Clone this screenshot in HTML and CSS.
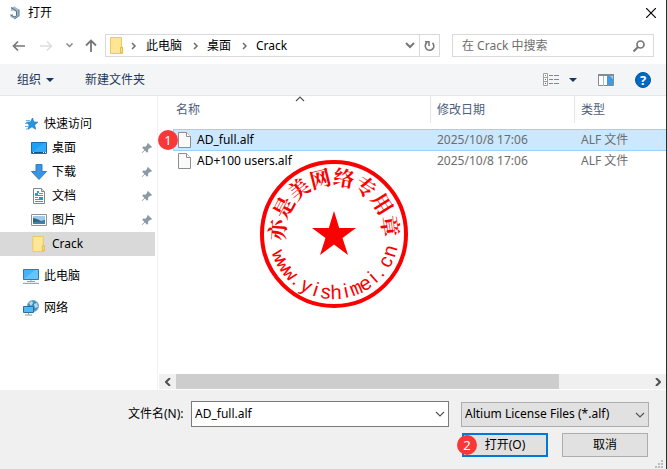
FILE: index.html
```html
<!DOCTYPE html>
<html lang="zh-CN">
<head>
<meta charset="utf-8">
<title>打开</title>
<link rel="stylesheet" href="styles.css">
</head>
<body>
<svg class="defs" aria-hidden="true">
  <symbol id="folder" viewBox="0 0 14 17"><path d="M.5.5h11v10h1v6h-12z" fill="#ffe695" stroke="#edc957"/><path d="M10.500 10.500h2v5h-2z" fill="#ffe695" stroke="#e3b83e"/></symbol>
  <symbol id="crumb" viewBox="0 0 6 8"><path d="M1 1l3 3-3 3" fill="none" stroke="#6d6d6d" stroke-width="1.500"/></symbol>
  <symbol id="down" viewBox="0 0 10 6"><path d="M1 1l4 4 4-4" fill="none" stroke="currentColor" stroke-width="1.200"/></symbol>
  <symbol id="caret" viewBox="0 0 8 4"><path d="M0 0h8L4 4z" fill="#1b355e"/></symbol>
  <symbol id="pin" viewBox="0 0 12 12"><path d="M7 1l4 4-1 1-1-.3-2 2 .2 2-1.200 1L4 8.500 1 11.300l-.4-.4L3.400 8 1.200 5.800l1-1.200 2.100.2 2-2L6 2z" fill="#8b99a3"/></symbol>
  <symbol id="file" viewBox="0 0 13 16"><path d="M.5.5h8l4 4v11H.5z" fill="#fafafa" stroke="#8e8e8e"/><path d="M8.500.5v4h4" fill="#fff" stroke="#8e8e8e"/></symbol>
</svg>
<div class="window">
  <header class="titlebar">
    <svg class="logo" viewBox="0 0 12 14"><path d="M2 1.500L5.500.5 10 3.500v6.300L5.500 13 1.500 11V8.500L4 8v1.500l2 .8 1.200-.8V6L4.500 4.500 2 5z" fill="#a3b6c4"/><path d="M2 1.500L7.500 5v4.800L5.500 11 1.500 9M10 3.500v6.300L5.500 13" fill="none" stroke="#58758a"/></svg>
    <h1>打开</h1>
    <button class="close" aria-label="关闭"><svg viewBox="0 0 10 10"><path d="M0 0l10 10M10 0L0 10" stroke="#000" stroke-width="1.200"/></svg></button>
  </header>

  <nav class="navbar">
    <div class="history">
      <button aria-label="后退"><svg width="13" height="12" viewBox="0 0 13 12"><path d="M6 1.500L1.500 6 6 10.500M1.500 6H13" fill="none" stroke="#777" stroke-width="1.700"/></svg></button>
      <button aria-label="前进"><svg width="13" height="12" viewBox="0 0 13 12"><path d="M7 1.500L11.500 6 7 10.500M11.500 6H0" fill="none" stroke="#ddd" stroke-width="1.500"/></svg></button>
      <button aria-label="最近"><svg width="7" height="5" viewBox="0 0 7 5"><path d="M.5.5l3 3 3-3" fill="none" stroke="#888" stroke-width="1.500"/></svg></button>
      <button aria-label="向上"><svg width="12" height="13" viewBox="0 0 12 13"><path d="M1 6.500l5-5 5 5M6 1.500V13" fill="none" stroke="#777" stroke-width="1.800"/></svg></button>
    </div>
    <div class="address">
      <svg class="folder"><use href="#folder"/></svg>
      <svg class="crumb"><use href="#crumb"/></svg><a href="#">此电脑</a>
      <svg class="crumb"><use href="#crumb"/></svg><a href="#">桌面</a>
      <svg class="crumb"><use href="#crumb"/></svg><a href="#">Crack</a>
      <button class="drop" aria-label="以前的位置"><svg width="10" height="7" viewBox="0 0 10 7"><path d="M1 1l4 4 4-4" fill="none" stroke="#777" stroke-width="2"/></svg></button>
      <button class="refresh" aria-label="刷新"><svg width="12" height="12" viewBox="0 0 12 12"><path d="M3 2.500a4.300 4.300 0 1 0 5.500.3" fill="none" stroke="#777" stroke-width="1.600"/><path d="M1 1.800h4V6" fill="none" stroke="#777" stroke-width="1.500"/></svg></button>
    </div>
    <div class="search">
      <input type="text" placeholder="在 Crack 中搜索" aria-label="在 Crack 中搜索">
      <svg width="12" height="12" viewBox="0 0 12 12"><circle cx="7.500" cy="4.500" r="3.500" fill="none" stroke="#777" stroke-width="1.700"/><path d="M5 7l-4.500 4.500" stroke="#777" stroke-width="2"/></svg>
    </div>
  </nav>

  <div class="toolbar">
    <button>组织<svg class="caret"><use href="#caret"/></svg></button>
    <button>新建文件夹</button>
    <div class="views">
      <button aria-label="视图"><svg width="17" height="14" viewBox="0 0 17 14"><path d="M.5.5h4v12h-4zM.5 4.500h4M.5 8.500h4" fill="#fff" stroke="#a0a0a0"/><path d="M2 2h1v1H2z" fill="#38a04a"/><path d="M2 6h1v1H2z" fill="#3b78d8"/><path d="M2 10h1v1H2z" fill="#e03030"/><path d="M6 2.500h4m1 0h5M6 6.500h4m1 0h5M6 10.500h4m1 0h5" stroke="#808890"/></svg><svg class="caret"><use href="#caret"/></svg></button>
      <button aria-label="预览窗格"><svg width="16" height="12" viewBox="0 0 16 12"><path d="M.5.5h15v11H.5z" fill="#fff" stroke="#848b91"/><path d="M0 0h16v2H0z" fill="#848b91"/><path d="M5.500 2v10" stroke="#b4b9be"/><path d="M9 2h6v9H9z" fill="#3f9be6"/><path d="M12 2h3v3z" fill="#9bd0f8"/></svg></button>
      <button class="help" aria-label="帮助">?</button>
    </div>
  </div>

  <div class="content">
    <aside class="sidebar">
      <ul>
        <li><a href="#"><svg class="icon" viewBox="0 0 16 16"><path d="M9.500 2l1.300 4 4 .2-3.200 2.700 1 4.300L9 10.800 5 13.200l1.200-4.300-2.700-2.700 4-.2z" fill="#2297e3" stroke="#1b79bd" stroke-width=".7"/><path d="M3 4.500h4M2 7.500h3M2 10.500h3M3 13h2" stroke="#60b7ee"/></svg>快速访问</a></li>
        <li class="child"><a href="#"><svg class="icon" viewBox="0 0 16 16"><path d="M.5 2.500h15v11H.5z" fill="#1ca0f5" stroke="#176fb0"/><path d="M1 12l12-9h2v10H1z" fill="#48b3f7" opacity=".5"/><path d="M1 12.500h14" stroke="#0a568f"/><path d="M2 12.500h1m9 0h1m1 0h1" stroke="#fff"/></svg>桌面<svg class="pin"><use href="#pin"/></svg></a></li>
        <li class="child"><a href="#"><svg class="icon" viewBox="0 0 16 16"><path d="M5 .5h6v7h4.500L8 15.500.5 7.500H5z" fill="#3b93e3" stroke="#337fbf"/></svg>下载<svg class="pin"><use href="#pin"/></svg></a></li>
        <li class="child"><a href="#"><svg class="icon" viewBox="0 0 16 16"><path d="M2.500.5h8l3 3v12h-11z" fill="#fff" stroke="#7e868d"/><path d="M10.500.5v3h3" fill="#ddd" stroke="#7e868d"/><path d="M4 5.500h3m1 0h4M4 7.500h8M4 9.500h3M4 11.500h8M4 13.500h8" stroke="#6d8ba3"/><path d="M6 3h2v2H6zM4 6h3v1H4zM8 9h4v3H8z" fill="#2296df"/></svg>文档<svg class="pin"><use href="#pin"/></svg></a></li>
        <li class="child"><a href="#"><svg class="icon" viewBox="0 0 16 16"><path d="M.5 2.500h15v11H.5z" fill="#fff" stroke="#8d9296"/><path d="M2 4h12v8H2z" fill="#9fcaf0"/><path d="M2 6l4 1 4 2 4-1v4H2z" fill="#2c6a68"/><path d="M2 10l12-1v3H2z" fill="#427cb1"/></svg>图片<svg class="pin"><use href="#pin"/></svg></a></li>
        <li class="child current"><a href="#"><svg class="icon"><use href="#folder"/></svg>Crack</a></li>
      </ul>
      <ul>
        <li><a href="#"><svg class="icon" viewBox="0 0 16 16"><path d="M.5 1.500h15v10H.5z" fill="#43b4fb" stroke="#39799f"/><path d="M1 11L12 2h3v9z" fill="#7ccefd" opacity=".6"/><path d="M8 12v1M4 13.500h8" stroke="#8fa5b3"/><path d="M0 15.300h16" stroke="#8496a8"/></svg>此电脑</a></li>
      </ul>
      <ul>
        <li><a href="#"><svg class="icon" viewBox="0 0 16 16"><circle cx="10" cy="6" r="5.500" fill="#3f8fbe" stroke="#7ba6bd"/><path d="M6 3l3-2 1 2-2 3zM11 4l3-1 1 4-3 1z" fill="#b5dced"/><path d="M.5 6.500h10v6H.5z" fill="#4fb8f8" stroke="#326f98"/><path d="M5.500 13v1.500M2 15h7" stroke="#8397a5"/></svg>网络</a></li>
      </ul>
    </aside>

    <main class="files">
      <svg class="sort"><use href="#down"/></svg>
      <table>
        <colgroup><col class="col-name"><col class="col-date"><col></colgroup>
        <thead><tr><th>名称</th><th>修改日期</th><th>类型</th></tr></thead>
        <tbody>
          <tr class="selected"><td><span class="badge">1</span><div class="name"><svg><use href="#file"/></svg>AD_full.alf</div></td><td>2025/10/8 17:06</td><td>ALF 文件</td></tr>
          <tr><td><div class="name"><svg><use href="#file"/></svg>AD+100 users.alf</div></td><td>2025/10/8 17:06</td><td>ALF 文件</td></tr>
        </tbody>
      </table>
      <svg class="stamp" viewBox="-75 -75 150 150">
        <circle r="72" fill="none" stroke="#fa0000" stroke-width="4"/>
        <path d="M0-23L5.200-6H22L8.500 4 14 21 0 10.500-14 21-8.500 4-22-6H-5.200z" fill="#fa0000"/>
        <g class="seal-top">
          <text y="-49" transform="rotate(-86)">亦</text>
          <text y="-49" transform="rotate(-62)">是</text>
          <text y="-49" transform="rotate(-38)">美</text>
          <text y="-49" transform="rotate(-14)">网</text>
          <text y="-49" transform="rotate(10)">络</text>
          <text y="-49" transform="rotate(34)">专</text>
          <text y="-49" transform="rotate(58)">用</text>
          <text y="-49" transform="rotate(82)">章</text>
        </g>
        <g class="seal-bottom">
          <text class="wide" y="65" transform="rotate(68)">w</text>
          <text class="wide" y="65" transform="rotate(58)">w</text>
          <text class="wide" y="65" transform="rotate(48)">w</text>
          <text y="65" transform="rotate(39)">.</text>
          <text y="65" transform="rotate(28)">y</text>
          <text y="65" transform="rotate(18)">i</text>
          <text y="65" transform="rotate(8)">s</text>
          <text y="65" transform="rotate(-2)">h</text>
          <text y="65" transform="rotate(-12)">i</text>
          <text class="wide" y="65" transform="rotate(-22)">m</text>
          <text y="65" transform="rotate(-32)">e</text>
          <text y="65" transform="rotate(-42)">i</text>
          <text y="65" transform="rotate(-50)">.</text>
          <text y="65" transform="rotate(-62)">c</text>
          <text y="65" transform="rotate(-73)">n</text>
        </g>
      </svg>
      <div class="scrollbar">
        <button aria-label="向左滚动"><svg width="6" height="8" viewBox="0 0 6 8"><path d="M5 0L1 4l4 4" fill="none" stroke="#505050" stroke-width="2"/></svg></button>
        <div class="track"><div class="thumb"></div></div>
        <button aria-label="向右滚动"><svg width="6" height="8" viewBox="0 0 6 8"><path d="M1 0l4 4-4 4" fill="none" stroke="#505050" stroke-width="2"/></svg></button>
      </div>
    </main>
  </div>

  <footer class="footer">
    <div class="fields">
      <label for="filename">文件名(N):</label>
      <div class="combo"><input id="filename" type="text" value="AD_full.alf"><button aria-label="展开"><svg class="chevron"><use href="#down"/></svg></button></div>
      <div class="filter"><select aria-label="文件类型"><option>Altium License Files (*.alf)</option></select><svg class="chevron"><use href="#down"/></svg></div>
    </div>
    <div class="actions">
      <button class="primary"><span class="badge">2</span>打开(O)</button>
      <button>取消</button>
    </div>
    <svg class="grip" viewBox="0 0 8 8"><path d="M6 0h2v2H6zM3 3h2v2H3zM6 3h2v2H6zM0 6h2v2H0zM3 6h2v2H3zM6 6h2v2H6z" fill="#bbb"/></svg>
  </footer>
</div>
</body>
</html>
```
FILE: styles.css
```css
* { box-sizing: border-box; }

body {
  margin: 0;
  font: 12px/16px "Noto Sans", "Noto Sans CJK SC", sans-serif;
  color: #000;
  background: #fff;
}

button, input, select { font: inherit; color: inherit; }
button { padding: 0; border: 0; background: none; }
a { color: inherit; text-decoration: none; }
svg { display: block; flex: none; }
ul { list-style: none; margin: 0; padding: 0; }
.defs { position: absolute; width: 0; height: 0; }

.window {
  display: flex;
  flex-direction: column;
  min-height: 100vh;
  border-right: 1px solid #2b2b2b;
}

.titlebar { display: flex; align-items: center; height: 26px; padding: 0 10px 0 9px; }
.titlebar h1 { flex: 1; margin: 0; font-size: 12px; font-weight: 400; }
.logo { width: 12px; height: 14px; margin-right: 7px; }
.close svg { width: 10px; height: 10px; }

.navbar { display: flex; align-items: center; padding: 8px 12px 7px 0; }
.history { display: flex; align-items: center; gap: 15px; width: 105px; padding-left: 12px; }
.history button:nth-child(3) { margin-left: -2px; }
.history button:nth-child(4) { margin-left: -3px; }
.address, .search { display: flex; align-items: center; height: 23px; border: 1px solid #d9d9d9; }
.address { flex: 1 1 335px; padding-left: 4px; }
.folder { width: 14px; height: 17px; }
.crumb { width: 6px; height: 8px; margin: 0 8px 0 11px; }
.address .folder + .crumb { margin-left: 7px; margin-right: 9px; }
.drop { margin-left: auto; margin-right: 4px; }
.refresh { display: flex; align-items: center; justify-content: center; width: 20px; height: 21px; border-left: 1px solid #d9d9d9; }
.search { flex: 1 1 202px; min-width: 0; margin-left: 12px; padding: 0 8px 0 9px; }
.search input { flex: 1; min-width: 0; padding: 0; border: 0; outline: 0; background: none; }
.search input::placeholder { color: #6d6d6d; opacity: 1; }

.toolbar {
  display: flex;
  align-items: center;
  gap: 31px;
  height: 32px;
  padding: 0 15px 0 17px;
  color: #1e395b;
  background: #f4f5f7;
  border-bottom: 1px solid #e5e6e8;
}
.toolbar button { display: flex; align-items: center; }
.caret { width: 8px; height: 4px; margin-left: 5px; }
.views { display: flex; align-items: center; gap: 21px; margin-left: auto; }
.views .caret { margin-left: 9px; }
.toolbar .help {
  justify-content: center;
  width: 16px;
  height: 16px;
  border: 1px solid #075394;
  border-radius: 50%;
  color: #fff;
  background: #0069c8;
  font-size: 13px;
  font-weight: 700;
}

.content { display: flex; flex: 1; }
.sidebar { display: flex; flex-direction: column; gap: 8px; width: 158px; padding: 16px 2px 0 0; border-right: 1px solid #f2f2f2; }
.sidebar a { display: flex; align-items: center; gap: 5px; height: 24px; padding: 0 2px 0 23px; }
.sidebar .child a { padding-left: 31px; }
.current { background: #d9d9d9; }
.icon { width: 16px; height: 16px; }
.pin { width: 12px; height: 12px; margin-left: auto; }

.files { position: relative; display: flex; flex-direction: column; flex: 1; min-width: 0; padding-left: 1px; }
.sort { position: absolute; top: 0; left: 137px; width: 10px; height: 6px; color: #555; transform: rotate(180deg); }
table { margin-left: 14px; table-layout: fixed; border-spacing: 0; }
.col-name { width: 258px; }
.col-date { width: 144px; }
th { height: 27px; padding: 0 0 0 6px; border-right: 1px solid #e5e5e5; color: #4c607a; font-weight: 400; text-align: left; }
th:first-child { padding-left: 3px; }
th:last-child { border-right: 0; }
tbody::before { content: ""; display: block; height: 6px; }
td { position: relative; height: 20px; padding: 0 0 0 6px; color: #6d6d6d; }
td:first-child { padding-left: 5px; color: #000; }
.selected td { height: 22px; border: solid #99d1ff; border-width: 1px 0; background: #cce8ff; }
.selected td:first-child { border-left-width: 1px; padding-left: 4px; }
.name { display: flex; align-items: center; gap: 6px; }
.name svg { width: 13px; height: 16px; }

.badge {
  position: absolute;
  top: 50%;
  left: -16px;
  width: 20px;
  height: 20px;
  margin-top: -10px;
  border-radius: 50%;
  color: #fff;
  background: #fa3737;
  font-size: 13px;
  line-height: 20px;
  text-align: center;
}

.stamp { position: absolute; top: 63px; left: 101px; width: 150px; height: 150px; }
.seal-top, .seal-bottom { fill: #fa0000; text-anchor: middle; }
.seal-top { font: 700 21px "Noto Serif CJK SC", "Noto Sans CJK SC", serif; }
.seal-bottom { font: 20px "Liberation Sans", sans-serif; }
.seal-bottom .wide { font-family: "Liberation Mono", monospace; }

.scrollbar { display: flex; height: 15px; margin: auto 0 1px; background: #f0f0f0; }
.scrollbar button { display: flex; align-items: center; justify-content: center; width: 17px; }
.track { flex: 1; }
.thumb { width: 81%; height: 100%; background: #cdcdcd; }

.footer { position: relative; padding: 11px 17px 12px 128px; background: #f0f0f0; }
.fields { display: flex; align-items: center; }
.fields label { width: 63px; }
.combo { display: flex; align-items: center; flex: 1 1 258px; min-width: 0; height: 26px; padding: 0 3px; border: 1px solid #7a7a7a; background: #fff; }
.combo input { flex: 1; min-width: 0; padding: 0; border: 0; outline: 0; background: none; }
.chevron { width: 10px; height: 6px; color: #555; }
.filter { position: relative; flex: 1 1 188px; min-width: 0; height: 25px; margin-left: 12px; }
.filter select { width: 100%; height: 25px; padding: 0 18px 0 3px; border: 1px solid #adadad; border-radius: 0; background: #e1e1e1; appearance: none; }
.filter .chevron { position: absolute; top: 10px; right: 4px; pointer-events: none; }
.actions { display: flex; justify-content: flex-end; gap: 14px; margin-top: 6px; padding-right: 1px; }
.actions button { position: relative; width: 86px; height: 24px; border: 1px solid #adadad; background: #e1e1e1; }
.actions .primary { border: 2px solid #0078d7; }
.actions .badge { left: -7px; }
.grip { position: absolute; right: 3px; bottom: 1px; width: 8px; height: 8px; }
```
